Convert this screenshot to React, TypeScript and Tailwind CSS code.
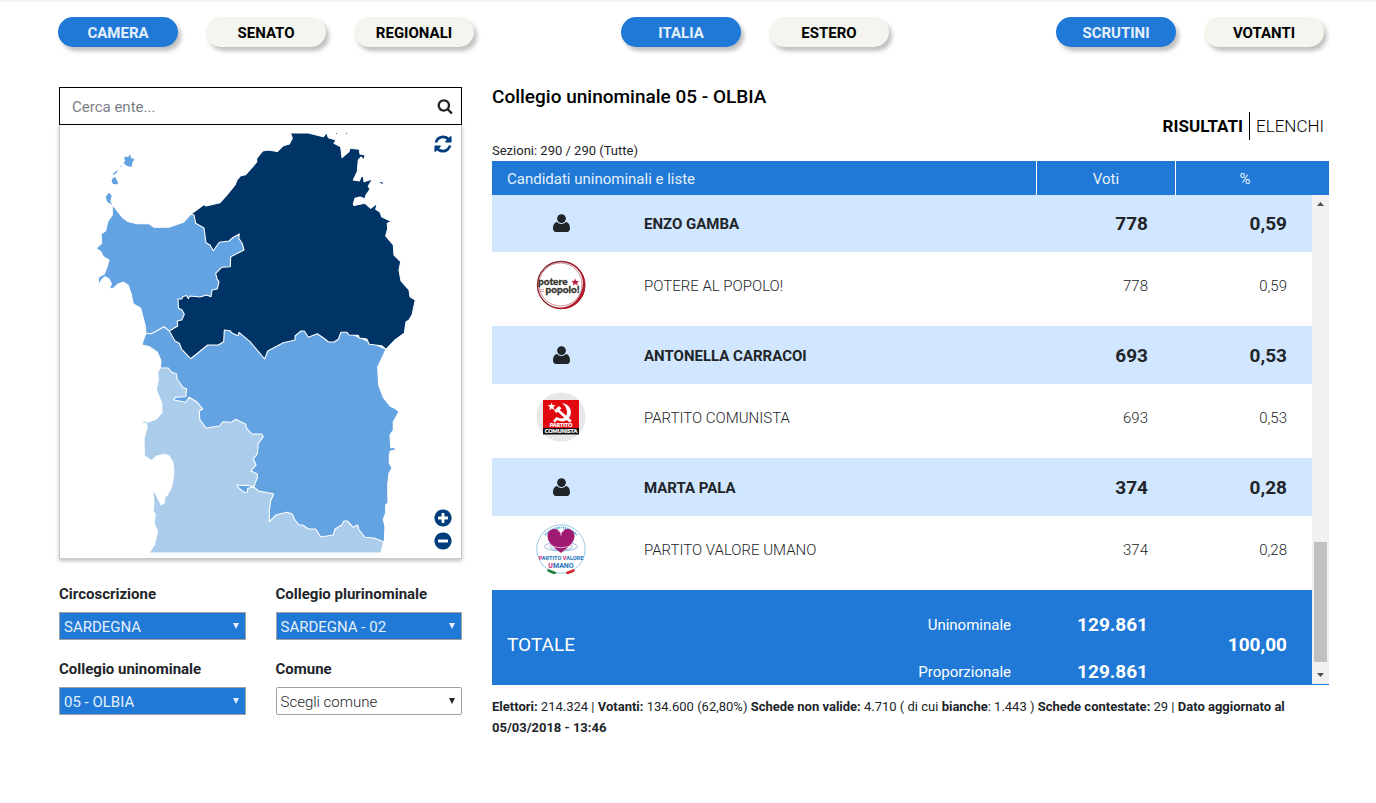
import { useState } from "react";
import clsx from "clsx";

const ICONS = {
  search:
    "M1216 832q0-185-131.5-316.5t-316.5-131.5-316.5 131.5-131.5 316.5 131.5 316.5 316.5 131.5 316.5-131.5 131.5-316.5zm512 832q0 52-38 90t-90 38q-54 0-90-38l-343-342q-179 124-399 124-143 0-273.5-55.5t-225-150-150-225-55.5-273.5 55.5-273.5 150-225 225-150 273.5-55.5 273.5 55.5 225 150 150 225 55.5 273.5q0 220-124 399l343 343q37 37 37 90z",
  refresh:
    "M1639 1056q0 5-1 7-64 268-268 434.5t-478 166.5q-146 0-282.5-55t-243.5-157l-129 129q-19 19-45 19t-45-19-19-45v-448q0-26 19-45t45-19h448q26 0 45 19t19 45-19 45l-137 137q71 66 161 102t187 36q134 0 250-65t186-179q11-17 53-117 8-23 30-23h192q13 0 22.5 9.5t9.5 22.5zm25-800v448q0 26-19 45t-45 19h-448q-26 0-45-19t-19-45 19-45l138-138q-148-137-349-137-134 0-250 65t-186 179q-11 17-53 117-8 23-30 23h-199q-13 0-22.5-9.5t-9.5-22.5v-7q65-268 270-434.5t480-166.5q146 0 284 55.5t245 156.5l130-129q19-19 45-19t45 19 19 45z",
  plus: "M1344 960v-128q0-26-19-45t-45-19h-256v-256q0-26-19-45t-45-19h-128q-26 0-45 19t-19 45v256h-256q-26 0-45 19t-19 45v128q0 26 19 45t45 19h256v256q0 26 19 45t45 19h128q26 0 45-19t19-45v-256h256q26 0 45-19t19-45zm320-64q0 209-103 385.5t-279.5 279.5-385.5 103-385.5-103-279.5-279.5-103-385.5 103-385.5 279.5-279.5 385.5-103 385.5 103 279.5 279.5 103 385.5z",
  minus:
    "M1344 960v-128q0-26-19-45t-45-19h-768q-26 0-45 19t-19 45v128q0 26 19 45t45 19h768q26 0 45-19t19-45zm320-64q0 209-103 385.5t-279.5 279.5-385.5 103-385.5-103-279.5-279.5-103-385.5 103-385.5 279.5-279.5 385.5-103 385.5 103 279.5 279.5 103 385.5z",
};

function Icon({ name, className }: { name: keyof typeof ICONS; className?: string }) {
  return (
    <svg viewBox="0 0 1792 1792" className={clsx("fill-current", className)} aria-hidden="true">
      <path d={ICONS[name]} />
    </svg>
  );
}

function UserIcon() {
  return (
    <svg viewBox="0 0 17 18" className="mx-auto h-[18px] w-[17px] fill-current" aria-hidden="true">
      <circle cx="8.5" cy="4.6" r="4.4" />
      <path d="M4 8C1.200 8.400 0 11.400 0 14.600C0 17 1.300 18 3 18H14C15.700 18 17 17 17 14.600C17 11.400 15.800 8.400 13 8C11.800 9.200 10.300 9.900 8.500 9.900S5.200 9.200 4 8Z" />
    </svg>
  );
}

function PillGroup({ items }: { items: string[] }) {
  const [active, setActive] = useState(items[0]);
  return (
    <div className="flex gap-7">
      {items.map((item) => (
        <button
          key={item}
          type="button"
          onClick={() => setActive(item)}
          className={clsx(
            "h-[30px] w-[120px] rounded-full pt-0.5 text-[15px] font-bold shadow-[3px_4px_4px_rgba(0,0,0,0.25)]",
            item === active ? "bg-[#2079d6] text-[#e4f0fc]" : "bg-[#f4f5ee] text-black",
          )}
        >
          {item}
        </button>
      ))}
    </div>
  );
}

// Districts are painted back to front, each one covers the inner edge of the previous
function SardiniaMap() {
  return (
    <svg
      viewBox="60 125 401 433"
      className="block w-full"
      stroke="#fff"
      strokeWidth="1.1"
      strokeLinejoin="round"
      role="img"
      aria-label="Mappa dei collegi della Sardegna"
    >
      <path
        fill="#abcceb"
        d="M160.3 367.7L168 365L200 380L280 430L383.5 535L383.3 543L381 553H149L154.3 545L157.7 531.7L154 523.3L155.3 514L153 511L154 503.3L153 491H154.3L161 504.8L164 503.3L165 497L167.3 495L171.7 486.7L173.7 475V468L172.7 461.7L169 456L165 454.3L156.7 456L151.7 460.7L144.3 455.7L144 438.3L147.3 426.7L146 423.5L140.7 423.3L144.3 421L147.7 422.3L156 419.3L162 412.7L161.7 403.3L156.3 390L158.3 380L157.7 371.7Z"
      />
      <path
        fill="#64a3e2"
        d="M146 330L200 320L320 320L386 349.3L377.7 367.3L378.7 385L383.3 397.3L390 406L396 409L399 411.7L393.3 421.7V430L390 435L390.7 447.7L394.3 447.3L395.7 450L390.5 451L389.3 455V463.3L392 468.3L389 473.3L387.7 485L388 503.3L385.7 505V513L383.3 519.3L385 526.7L384.3 542.3L374 538L365 537.3L359 530L357.7 525L353.3 527.3L347.3 521H344L341.7 525L335 529L333.3 535L320.7 537L315.7 529H308.3L302.7 525H299L295 520L292 514L287 512.3L276 515L269.3 521.7V510L270.7 500.7L273.3 495L273.3 493.7L258.3 491L254 487L250 487.3L254 486L257.3 478V474L251 471L256 465L253.3 459L257.3 454L258.3 443.3L263.3 436.7L261.7 434L251.7 434L246.7 428.3L245.7 424.3L235.7 419.3L231.7 422.3L223.3 421.7L219.3 426L206 428L199.7 419.3L199.3 411L202.7 409L196.7 401.7L189 397.3L186 402.3L174 400L175.3 397.3L185.7 396.7L186.7 389L182.7 387.3L176.7 378.3V374L171.7 372.3L168.3 368L160.3 367.7L161 360.7L157.3 352.3L149 346.5L142 345L143 341L146 333.3Z"
      />
      <path
        fill="#64a3e2"
        d="M254 487L247.7 488.3L247.3 492.3H244L239 488.3L237 484.7L242 485.5L247.7 485.3Z"
      />
      <path
        fill="#003366"
        d="M190.7 214.3L204.3 204.3L206 206L220 202.7L227 195L235 185L237 180L240.7 175.7L245.7 174.7L256.7 162V158.5L262.7 151L268 150L277.3 151.5L283.3 145.7L289.3 144L292.3 138.3L290.3 133H308.3L323.3 136.7L326.7 132.7L328.3 137.7L336 140L334 143.3L340.7 146.7L342 157.7L349 151.7L349.7 148.3L359.3 149.3L360 154L365 155L364 160L361 157L358.3 160L357.3 171.7L353.3 180L359.3 181L361 177L363.3 176L364 181.7L372.7 179L368.3 186L370 189.3L366 195L365 198.7L360 197L355 198.3L353.3 204L354 205.5L365 203.3L370.7 208.3L377.3 203.3L375.7 209.3L380 212L381.7 216.7L391.7 221.7L387.3 223.3L387.7 229L385.7 236L393.3 245L394 255L400.7 261.7L399 270L401 281L409 290L410 296.7L415.3 300L412 315L409 320L406 322L404.3 333.3L395 340L386 349.3L381.7 345.7L369.3 344.3L366.7 339L359.3 338L358.3 335.3L349 335L347 332.3H341L338.3 339.3L334 342H328.3L325 339L317.3 333.7L308.3 337.3L304.3 331H301L295 336V340L283.3 342.7L267.7 351L264.7 359L250 341.7L239 332.3L238.3 335.7L232.3 333.3L230 330.7L224.3 330L223.7 341.7L218.3 345H207.7L190.7 358.7L181.7 349.3L179.3 343.3L175 341L169.3 331L172 318L160 290L200 265L190 230Z"
      />
      <path
        fill="#64a3e2"
        d="M112.7 205L122 217L128.3 221.7L137.3 223.7H149.3L154 227.3L168.7 227.3L183.3 222.3L190.7 214.3L194 215L195.7 223.3L204 228L206 242.7L210 245L213.3 250.7L219.3 242.3L229 241L233 237.5L239.3 234L238.7 238.3L242 243L244 250L230.7 256.7L230.3 266.7L221.7 267.3L215.7 273.3L217 279L219 281.7L217.3 289L212 290L211 296.7L206.7 295L200 297L190 296L188.3 298.5L186.5 295.5L183 296.5L181.7 299L178 299L178.5 308.3L182 310L184.3 314.3L181.7 320L177.3 321L177.7 326L169.3 331L164 326.7L160 329L155 331.7L151 333.8L146 333.3L145 325L140.7 308.3L133.3 304L131.5 295L129.3 288.3L128 285L123.3 282.3L118 284L114 288L109 288.3L111.5 284L109 279L105 276.7L101.5 280L98.3 286V277.3L104.3 274L107 267L109 260L103.3 256.7L101 252L96 248.3L101.7 243.3L101 234L105.7 230.7L107.7 221.7L112.3 215V205.7L106.7 202L105 196.7L109 191.7L112.3 195.7L111 201Z"
      />
      <g fill="#64a3e2" stroke="none">
        <path d="M124 156.7L128 157L130.3 154.3L131 158L134.7 159.3L132.5 162L131.7 167L127 166L123.5 163L125 161Z" />
        <path d="M112 179L115 176.7L118.3 183L117 184.3L113 184L111.7 181.5Z" />
        <path d="M113 173.5L118 170L117 172.5L113.5 175ZM120 167L122 164.5L121.5 166.5Z" />
      </g>
      <path fill="#003366" stroke="none" d="M379 182L383 182.5L382.5 184ZM336 133h1v.7h-1ZM346 133h1v.7h-1Z" />
    </svg>
  );
}

function PotereLogo() {
  return (
    <svg viewBox="0 0 50 50" className="mx-auto size-[50px]" role="img" aria-label="Potere al Popolo">
      <circle cx="25" cy="25" r="23.5" fill="#fff" stroke="#8f2733" strokeWidth="1.4" />
      <path d="M15 3.5A24 24 0 1 1 12 45A23 23 0 0 0 45 32A22 22 0 0 0 15 3.5Z" fill="#b01c2e" />
      <circle cx="24.5" cy="24.5" r="21.5" fill="#fff" stroke="#b5646c" strokeWidth="0.7" />
      <g fontFamily="Lato, sans-serif" fontWeight="900" fill="#37352f" stroke="#37352f" strokeWidth="0.3">
        <text x="2" y="25" fontSize="10">potere</text>
        <text x="9.5" y="32.5" fontSize="10">popolo!</text>
      </g>
      <path d="M39 18.500l1.200 2.600 3-.2-2.200 2 1 2.700-2.700-1.500-2.500 1.700.7-2.900-2.400-1.800 3-.2z" fill="#c02040" />
      <path d="M4 29.500h4M3 31.500h5" stroke="#d98a98" strokeWidth="0.8" />
    </svg>
  );
}

function ComunistaLogo() {
  return (
    <svg viewBox="0 0 50 50" className="mx-auto size-[50px]" role="img" aria-label="Partito Comunista">
      <circle cx="25" cy="25" r="24.5" fill="#e8e8e8" />
      <rect x="7" y="8" width="36" height="34" fill="#e2080f" />
      <rect x="7" y="36" width="36" height="6.5" fill="#111" />
      <path d="M15.500 10.500l1.200 2.800 3-.2-2.200 2 1 2.900-2.700-1.600-2.500 1.800.7-3-2.400-1.900 3.100-.2z" fill="#fff" />
      <path d="M26 11c8 1 11.500 9 7 15-3 4-8 4.300-11.500 2l-2.500 2.500-2-1.800 3.500-3.700c4 2.500 8.500 1.600 10-2 1.500-4-.5-9-4.500-12z" fill="#fff" />
      <path d="M18 18.500l5-4.500 2.500 2.200-1.800 1.800 12 10.500-1.900 2.200-12.100-10.900-1.500 1.200z" fill="#fff" />
      <g fontFamily="Lato, sans-serif" fontWeight="900" fill="#fff" stroke="#fff" strokeWidth="0.2" textAnchor="middle">
        <text x="25" y="35.3" fontSize="5.4">PARTITO</text>
        <text x="25" y="41.3" fontSize="5.4">COMUNISTA</text>
      </g>
    </svg>
  );
}

function ValoreUmanoLogo() {
  return (
    <svg viewBox="0 0 50 50" className="mx-auto size-[50px]" role="img" aria-label="Partito Valore Umano">
      <circle cx="25" cy="25" r="24.2" fill="#fff" stroke="#6fb0d8" strokeWidth="0.7" />
      <path d="M9 11Q25-4 41 11" fill="none" stroke="#62aedb" strokeWidth="2" strokeDasharray="1.5 .7" />
      <g fill="none" stroke="#7fa9d6" strokeWidth="0.8">
        <ellipse cx="25" cy="22.5" rx="16.5" ry="4.5" />
        <ellipse cx="25" cy="23" rx="11" ry="3" />
      </g>
      <path d="M25 29C19 24 11.500 19 11.500 12C11.500 4.500 21 2.500 25 8.500C29 2.500 38.500 4.500 38.500 12C38.500 19 31 24 25 29Z" fill="#a01a72" />
      <path d="M13 20.500Q25 27 37 20.500" fill="none" stroke="#e7c2dc" strokeWidth="0.9" />
      <path d="M25 2l.8 4 2.700 1-2.700 1L25 13l-.8-5-2.700-1 2.700-1z" fill="#fff" />
      <g fontFamily="Roboto, sans-serif" fontWeight="700" fill="#1c74b8" stroke="none" textAnchor="middle">
        <text x="25" y="36" fontSize="5.6">
          <tspan fill="#d81b7a">P</tspan>ARTITO <tspan fill="#d81b7a">V</tspan>ALORE
        </text>
        <text x="25" y="43.5" fontSize="7">
          <tspan fill="#d81b7a">U</tspan>MANO
        </text>
      </g>
      <path d="M12 45l8 3-.5 2.500q-5-1-8.500-3.500z" fill="#23803b" />
      <path d="M38 45l-8 3 .5 2.500q5-1 8.500-3.500z" fill="#d12a30" />
    </svg>
  );
}

const CANDIDATES = [
  { name: "ENZO GAMBA", list: "POTERE AL POPOLO!", votes: "778", pct: "0,59", Logo: PotereLogo },
  { name: "ANTONELLA CARRACOI", list: "PARTITO COMUNISTA", votes: "693", pct: "0,53", Logo: ComunistaLogo },
  { name: "MARTA PALA", list: "PARTITO VALORE UMANO", votes: "374", pct: "0,28", Logo: ValoreUmanoLogo },
];

const FILTERS = [
  { id: "circoscrizione", label: "Circoscrizione", value: "SARDEGNA", selected: true },
  { id: "plurinominale", label: "Collegio plurinominale", value: "SARDEGNA - 02", selected: true },
  { id: "uninominale", label: "Collegio uninominale", value: "05 - OLBIA", selected: true },
  { id: "comune", label: "Comune", value: "Scegli comune", selected: false },
];

const SUMMARY = [
  { text: "Elettori:", bold: true },
  { text: " 214.324 | " },
  { text: "Votanti:", bold: true },
  { text: " 134.600 (62,80%) " },
  { text: "Schede non valide:", bold: true },
  { text: " 4.710 ( di cui " },
  { text: "bianche", bold: true },
  { text: ": 1.443 ) " },
  { text: "Schede contestate:", bold: true },
  { text: " 29 | " },
  { text: "Dato aggiornato al ", bold: true },
  { text: "05/03/2018 - 13:46", bold: true },
];

function FilterSelect({ id, label, value, selected }: (typeof FILTERS)[number]) {
  return (
    <div>
      <label htmlFor={id} className="block h-[30px] text-[15px] leading-6 font-bold">
        {label}
      </label>
      <div className={clsx("relative", selected ? "text-[#e4f0fc]" : "text-[#212529]")}>
        <select
          id={id}
          className={clsx(
            "block h-7 w-full appearance-none border border-[#a0a0a0] pt-0.5 pl-1 text-[15px] leading-6",
            selected ? "bg-[#2079d6]" : "rounded-xs bg-white font-light",
          )}
        >
          <option>{value}</option>
        </select>
        <svg viewBox="0 0 6 6" className="pointer-events-none absolute top-[11px] right-[7px] size-1.5 fill-current">
          <path d="M0 0h6L3 6z" />
        </svg>
      </div>
    </div>
  );
}

function Sidebar() {
  return (
    <aside>
      <div className="flex h-[38px] items-center border border-black pr-2">
        <input
          type="search"
          aria-label="Cerca ente"
          placeholder="Cerca ente..."
          className="h-full min-w-0 flex-1 pt-0.5 pl-3 text-[15px] outline-none placeholder:text-[#7b8086]"
        />
        <button type="button" aria-label="Cerca" className="text-[#212529]">
          <Icon name="search" className="size-4" />
        </button>
      </div>
      <div className="relative border border-t-0 border-[#c8c8c8] shadow-[0_2px_4px_rgba(0,0,0,0.25)]">
        <SardiniaMap />
        <button type="button" aria-label="Ripristina" className="absolute top-[9px] right-2 text-[#003d7c]">
          <Icon name="refresh" className="size-5" />
        </button>
        <div className="absolute right-2 bottom-[7px] flex flex-col gap-[3px] text-[#003d7c]">
          <button type="button" aria-label="Ingrandisci">
            <Icon name="plus" className="size-5" />
          </button>
          <button type="button" aria-label="Riduci">
            <Icon name="minus" className="size-5" />
          </button>
        </div>
      </div>
      <div className="mt-[23px] grid grid-cols-2 gap-x-[30px] gap-y-[17px]">
        {FILTERS.map((f) => (
          <FilterSelect key={f.id} {...f} />
        ))}
      </div>
    </aside>
  );
}

function Scrollbar() {
  return (
    <div className="flex w-[17px] shrink-0 flex-col items-center bg-[#f1f1f1] fill-[#505050]" aria-hidden="true">
      <svg viewBox="0 0 17 17" className="size-[17px]">
        <path d="M5 11h7L8.500 7z" />
      </svg>
      <div className="flex-1" />
      <div className="h-[120px] w-[13px] bg-[#c1c1c1]" />
      <div className="h-[5px]" />
      <svg viewBox="0 0 17 17" className="size-[17px]">
        <path d="M5 6h7l-3.500 4z" />
      </svg>
    </div>
  );
}

function Results() {
  return (
    <section>
      <h1 className="text-[19px] leading-5 font-medium text-black">Collegio uninominale 05 - OLBIA</h1>
      <div className="mt-[5px] flex h-7 items-center justify-end pr-[5px] text-[17px] leading-7 text-black">
        <a href="#risultati" className="border-r border-black pr-1.5 font-bold">
          RISULTATI
        </a>
        <a href="#elenchi" className="pl-1.5 font-light">
          ELENCHI
        </a>
      </div>
      <p className="text-[13px] leading-[21px]">Sezioni: 290 / 290 (Tutte)</p>

      <div className="flex h-[34px] bg-[#2079d6] text-[15px] leading-9 text-[#e4f0fc]">
        <div className="flex-1 pl-[15px]">Candidati uninominali e liste</div>
        <div className="w-[139px] border-l border-white text-center">Voti</div>
        <div className="w-[154px] border-l border-white pr-[15px] text-center">%</div>
      </div>
      <div className="flex h-[490px] border-b border-[#2079d6]">
        <div className="min-w-0 flex-1 overflow-hidden">
          <table className="-mt-px w-full table-fixed">
            <colgroup>
              <col className="w-[152px]" />
              <col />
              <col className="w-[139px]" />
              <col className="w-[136px]" />
            </colgroup>
            <tbody>
              {CANDIDATES.map(({ name, list, votes, pct, Logo }) => [
                <tr key={name} className="h-[58px] bg-[#d1e6ff] font-bold">
                  <td className="pr-[14px]">
                    <UserIcon />
                  </td>
                  <td className="pt-0.5 text-[15px]">{name}</td>
                  <td className="pt-0.5 pr-7 text-right text-[19px]">{votes}</td>
                  <td className="pt-0.5 pr-[25px] text-right text-[19px]">{pct}</td>
                </tr>,
                <tr key={list} className="h-[74px] font-light">
                  <td className="pr-[14px] pb-2">
                    <Logo />
                  </td>
                  <td className="pb-1.5 text-[15px]">{list}</td>
                  <td className="pr-7 pb-1.5 text-right text-[15px]">{votes}</td>
                  <td className="pr-[25px] pb-1.5 text-right text-[15px]">{pct}</td>
                </tr>,
              ])}
              <tr className="h-[68px] bg-[#2079d6] text-white">
                <td rowSpan={2} className="pt-0.5 pl-[15px] text-[19px]">
                  TOTALE
                </td>
                <td className="pt-0.5 pr-[26px] text-right text-[15px]">Uninominale</td>
                <td className="pt-0.5 pr-7 text-right text-[19px] font-bold">129.861</td>
                <td rowSpan={2} className="pt-0.5 pr-[25px] text-right text-[19px] font-bold">
                  100,00
                </td>
              </tr>
              <tr className="h-10 bg-[#2079d6] align-top text-white">
                <td className="pr-[26px] text-right text-[15px] leading-7">Proporzionale</td>
                <td className="pr-7 text-right text-[19px] leading-7 font-bold">129.861</td>
              </tr>
            </tbody>
          </table>
        </div>
        <Scrollbar />
      </div>
      <p className="mt-[11px] pr-2 text-[13px] leading-[21px]">
        {SUMMARY.map(({ text, bold }) => (
          <span key={text} className={bold ? "font-bold" : "font-normal"}>
            {text}
          </span>
        ))}
      </p>
    </section>
  );
}

export default function App() {
  return (
    <div className="border-t-2 border-[#f4f5ee] bg-white font-['Roboto',sans-serif] text-[#212529]">
      <nav className="grid grid-cols-[563fr_435fr_268fr] pt-[15px] pr-[52px] pl-[58px]">
        <PillGroup items={["CAMERA", "SENATO", "REGIONALI"]} />
        <PillGroup items={["ITALIA", "ESTERO"]} />
        <PillGroup items={["SCRUTINI", "VOTANTI"]} />
      </nav>
      <main className="mt-10 grid grid-cols-[403fr_837fr] gap-x-[30px] pr-[47px] pl-[59px]">
        <Sidebar />
        <Results />
      </main>
    </div>
  );
}
